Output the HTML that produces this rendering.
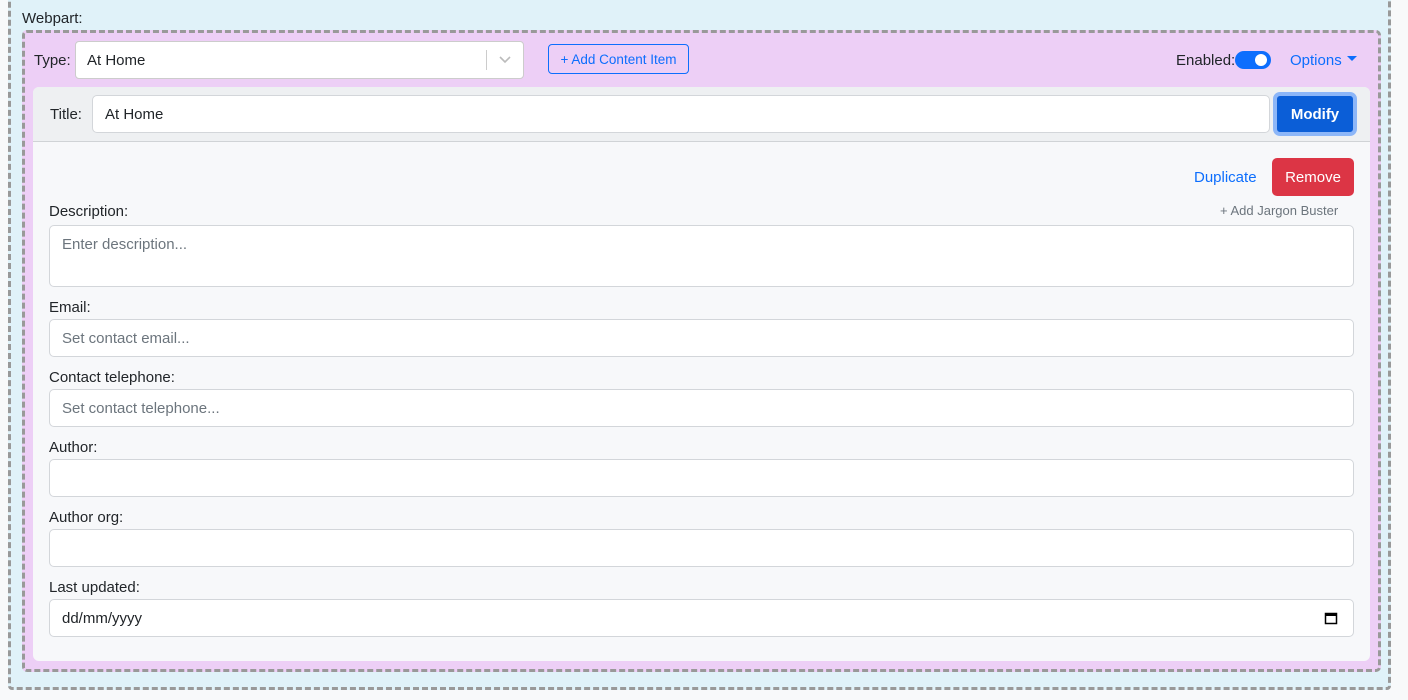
<!DOCTYPE html><html><head><style>
*{box-sizing:border-box}
body{margin:0;width:1408px;height:700px;background:#f8f9fa;font-family:"Liberation Sans",sans-serif;font-size:15px;color:#212529;position:relative;overflow:hidden}
.outer{position:absolute;left:8px;top:-10px;width:1383px;height:700px;background:#e0f2f9;border:3px dashed #999;border-radius:4px}
.wl{position:absolute;left:22px;top:10px;font-size:15px}
.purple{position:absolute;left:22px;top:30px;width:1359px;height:642px;background:#edcff6;border:3px dashed #999;border-radius:5px}
.abs{position:absolute}
.sel{left:75px;top:41px;width:449px;height:38px;background:#fff;border:1px solid #ccc;border-radius:4px}
.btnout{left:548px;top:44px;width:141px;height:30px;border:1px solid #0d6efd;border-radius:4px;color:#0d6efd;font-size:13.5px;text-align:center;line-height:29px}
.card{left:33px;top:87px;width:1337px;height:574px;background:#f7f8fa;border-radius:6px;overflow:hidden}
.chead{left:0;top:0;width:1337px;height:55px;background:#eef0f2;border-bottom:1px solid #d0d3d6}
.inp{background:#fff;border:1px solid #d3d6da;border-radius:5px;color:#6c757d;padding-left:12px;display:flex;align-items:center;padding-top:1px}
</style></head><body>
<div class="outer"></div>
<div class="wl">Webpart:</div>
<div class="purple"></div>
<div class="abs" style="left:34px;top:52px">Type:</div>
<div class="abs sel"><span class="abs" style="left:11px;top:10px">At Home</span><span class="abs" style="left:410px;top:8px;width:1px;height:20px;background:#ccc"></span><svg class="abs" style="left:422px;top:12px" width="14" height="12"><path d="M2 3l5 5 5-5" stroke="#bbb" stroke-width="1.6" fill="none"/></svg></div>
<div class="abs btnout">+ Add Content Item</div>
<div class="abs" style="left:1176px;top:52px">Enabled:</div>
<div class="abs" style="left:1235px;top:51px;width:36px;height:18px;background:#0d6efd;border-radius:9px"><div class="abs" style="left:20px;top:3px;width:12px;height:12px;background:#fff;border-radius:50%"></div></div>
<div class="abs" style="left:1290px;top:52px;color:#0d6efd">Options</div>
<svg class="abs" style="left:1347px;top:56px" width="10" height="6"><path d="M0 0h10L5 5z" fill="#0d6efd"/></svg>
<div class="abs card">
<div class="abs chead"></div>
<div class="abs" style="left:17px;top:19px">Title:</div>
<div class="abs inp" style="left:59px;top:8px;width:1178px;height:38px;color:#212529">At Home</div>
<div class="abs" style="left:1240px;top:5px;width:84px;height:44px;border:4px solid #8cb6f8;border-radius:7px;background:#0b5ed7;color:#fff;font-weight:600;text-align:center;line-height:37px">Modify</div>
<div class="abs" style="left:1161px;top:82px;color:#0d6efd">Duplicate</div>
<div class="abs" style="left:1239px;top:71px;width:82px;height:38px;background:#dc3545;border-radius:5px;color:#fff;text-align:center;line-height:39px">Remove</div>
<div class="abs" style="left:16px;top:116px">Description:</div>
<div class="abs" style="left:1187px;top:116px;font-size:13px;color:#6c757d">+ Add Jargon Buster</div>
<div class="abs inp" style="left:16px;top:138px;width:1305px;height:62px;align-items:flex-start;padding-top:10px">Enter description...</div>
<div class="abs" style="left:16px;top:212px">Email:</div>
<div class="abs inp" style="left:16px;top:232px;width:1305px;height:38px">Set contact email...</div>
<div class="abs" style="left:16px;top:282px">Contact telephone:</div>
<div class="abs inp" style="left:16px;top:302px;width:1305px;height:38px">Set contact telephone...</div>
<div class="abs" style="left:16px;top:352px">Author:</div>
<div class="abs inp" style="left:16px;top:372px;width:1305px;height:38px"></div>
<div class="abs" style="left:16px;top:422px">Author org:</div>
<div class="abs inp" style="left:16px;top:442px;width:1305px;height:38px"></div>
<div class="abs" style="left:16px;top:492px">Last updated:</div>
<div class="abs inp" style="left:16px;top:512px;width:1305px;height:38px;color:#212529">dd/mm/yyyy</div>
<svg class="abs" style="left:1291px;top:524px" width="14" height="14"><rect x="1.5" y="2.5" width="11" height="10" fill="none" stroke="#000" stroke-width="1.5"/><rect x="1.5" y="2.5" width="11" height="2.5" fill="#000"/></svg>
</div>
</body></html>
